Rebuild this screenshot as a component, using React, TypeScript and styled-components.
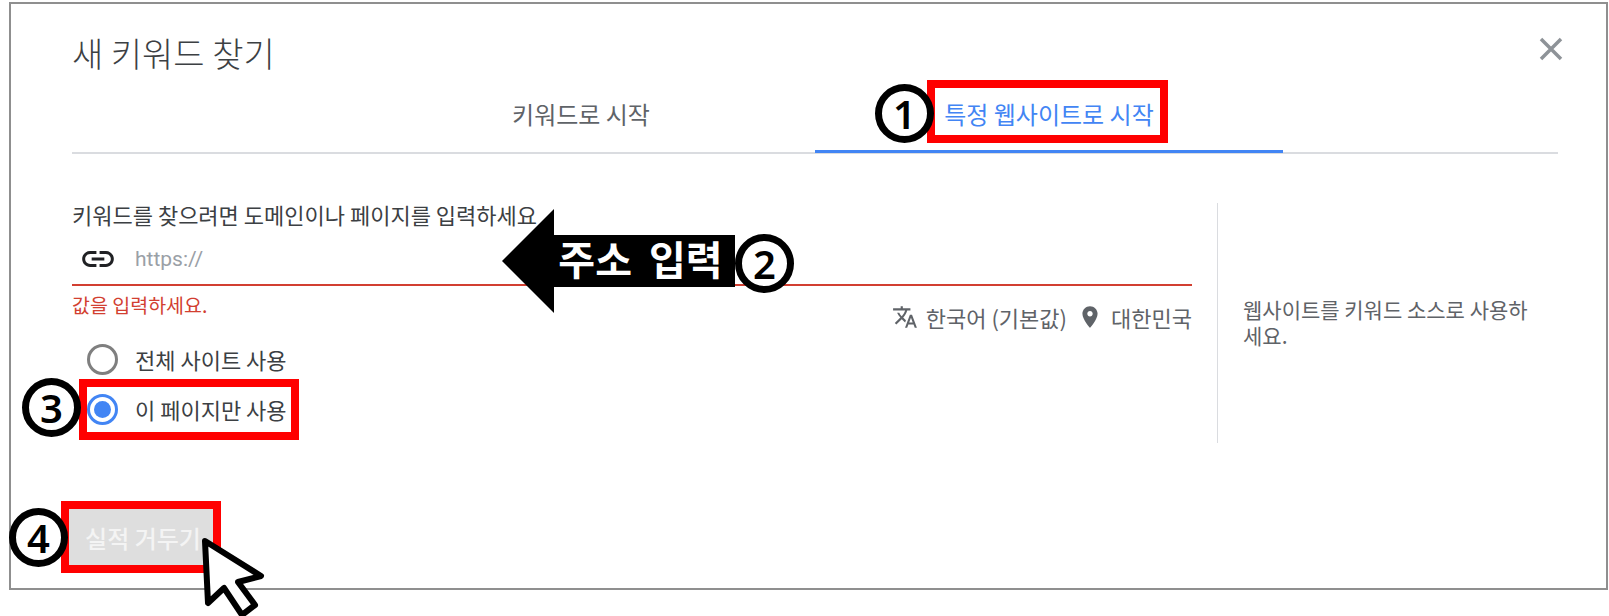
import { FC } from "react";
import styled, { createGlobalStyle } from "styled-components";

const GlobalStyle = createGlobalStyle`
    html, body {
        margin: 0;
        padding: 0;
        background: white;
    }
    body {
        font-family: "Noto Sans CJK KR", "Noto Sans", sans-serif;
    }
`;

const App: FC = () => {
    return (
        <Page>
            <GlobalStyle />
            <Dialog>
                <Header>
                    <Title>새 키워드 찾기</Title>
                    <CloseIcon viewBox="0 0 24 24">
                        <path d="M2 2 L22 22 M22 2 L2 22" />
                    </CloseIcon>
                </Header>

                <Tabs>
                    <Tab>키워드로 시작</Tab>
                    <Tab $active>특정 웹사이트로 시작</Tab>
                </Tabs>

                <Body>
                    <FormColumn>
                        <FieldLabel>키워드를 찾으려면 도메인이나 페이지를 입력하세요</FieldLabel>
                        <InputRow>
                            <LinkIcon viewBox="0 0 24 24">
                                <path d="M3.9 12c0-1.71 1.39-3.1 3.1-3.1h4V7H7c-2.76 0-5 2.24-5 5s2.24 5 5 5h4v-1.9H7c-1.71 0-3.1-1.39-3.1-3.1zM8 13h8v-2H8v2zm9-6h-4v1.9h4c1.71 0 3.1 1.39 3.1 3.1s-1.39 3.1-3.1 3.1h-4V17h4c2.76 0 5-2.24 5-5s-2.24-5-5-5z" />
                            </LinkIcon>
                            <Placeholder>https://</Placeholder>
                        </InputRow>
                        <FieldMeta>
                            <ErrorText>값을 입력하세요.</ErrorText>
                            <Locale>
                                <LocaleIcon viewBox="0 0 24 24">
                                    <path d="M12.87 15.07l-2.54-2.51.03-.03c1.74-1.94 2.98-4.17 3.71-6.53H17V4h-7V2H8v2H1v1.99h11.17C11.5 7.92 10.44 9.75 9 11.35 8.07 10.32 7.3 9.19 6.69 8h-2c.73 1.63 1.73 3.17 2.98 4.56l-5.09 5.02L4 19l5-5 3.11 3.11.76-2.04zM18.5 10h-2L12 22h2l1.12-3h4.75L21 22h2l-4.5-12zm-2.62 7l1.62-4.33L19.12 17h-3.24z" />
                                </LocaleIcon>
                                <LocaleText>한국어 (기본값)</LocaleText>
                                <LocaleIcon viewBox="0 0 24 24" $gap>
                                    <path d="M12 2C8.13 2 5 5.13 5 9c0 5.25 7 13 7 13s7-7.75 7-13c0-3.87-3.13-7-7-7zm0 9.5c-1.38 0-2.5-1.12-2.5-2.5s1.12-2.5 2.5-2.5 2.5 1.12 2.5 2.5-1.12 2.5-2.5 2.5z" />
                                </LocaleIcon>
                                <LocaleText>대한민국</LocaleText>
                            </Locale>
                        </FieldMeta>
                        <RadioGroup>
                            <RadioRow>
                                <Radio />
                                <RadioLabel>전체 사이트 사용</RadioLabel>
                            </RadioRow>
                            <RadioRow>
                                <Radio $checked />
                                <RadioLabel>이 페이지만 사용</RadioLabel>
                            </RadioRow>
                        </RadioGroup>
                    </FormColumn>
                    <HelpColumn>
                        <HelpText>웹사이트를 키워드 소스로 사용하세요.</HelpText>
                    </HelpColumn>
                </Body>

                <SubmitButton>실적 거두기</SubmitButton>
            </Dialog>

            {/* annotations drawn over the screenshot */}
            <RedBox $x={927} $y={80} $w={241} $h={63} />
            <RedBox $x={79} $y={379} $w={220} $h={61} />
            <RedBox $x={61} $y={501} $w={160} $h={72} />

            <ArrowLabel>
                <ArrowHead viewBox="0 0 52 104">
                    <path d="M52 0 L0 52 L52 104 Z" />
                </ArrowHead>
                <ArrowShaft>주소 입력</ArrowShaft>
            </ArrowLabel>

            <NumberBadge $x={875} $y={84}>1</NumberBadge>
            <NumberBadge $x={735} $y={234}>2</NumberBadge>
            <NumberBadge $x={22} $y={378}>3</NumberBadge>
            <NumberBadge $x={9} $y={508}>4</NumberBadge>

            <Cursor viewBox="0 0 70 85">
                <path d="M5 5 L61 40 L38 46 L55 69 L42 79 L24 52 L8 67 Z" />
            </Cursor>
        </Page>
    );
};

export default App;

const Page = styled.div`
    position: relative;
    width: 1609px;
    height: 616px;
    padding: 2px 0 0 9px;
    box-sizing: border-box;
    overflow: hidden;
    background: white;
`;

const Dialog = styled.div`
    width: 1599px;
    height: 588px;
    box-sizing: border-box;
    padding: 0 48px 0 61px;
    border: 2px solid #8f8f8f;
    display: flex;
    flex-direction: column;
    background: white;
`;

const Header = styled.div`
    height: 85px;
    display: flex;
    justify-content: space-between;
    align-items: flex-start;
`;

const Title = styled.div`
    margin-top: 26px;
    font-size: 34px;
    line-height: 46px;
    font-weight: 300;
    color: #3c4043;
`;

const CloseIcon = styled.svg`
    width: 24px;
    height: 24px;
    margin-top: 33px;
    margin-right: -5px;
    fill: none;
    stroke: #8e9398;
    stroke-width: 3.5;
`;

const Tabs = styled.div`
    display: flex;
    justify-content: center;
    border-bottom: 2px solid #dadce0;
`;

const Tab = styled.div<{ $active?: boolean }>`
    width: 468px;
    height: 64px;
    box-sizing: border-box;
    padding-bottom: 12px;
    margin-bottom: -1px;
    display: flex;
    justify-content: center;
    align-items: center;
    font-size: 24px;
    color: ${(p) => (p.$active ? "#4285f4" : "#5f6368")};
    border-bottom: 3px solid ${(p) => (p.$active ? "#4285f4" : "transparent")};
`;

const Body = styled.div`
    height: 240px;
    margin-top: 49px;
    display: flex;
`;

const FormColumn = styled.div`
    width: 1120px;
    display: flex;
    flex-direction: column;
`;

const FieldLabel = styled.div`
    height: 30px;
    margin-top: -4px;
    font-size: 22px;
    line-height: 30px;
    color: #3c4043;
    white-space: nowrap;
`;

const InputRow = styled.div`
    height: 57px;
    box-sizing: border-box;
    display: flex;
    align-items: center;
    padding: 5px 0 0 7px;
    border-bottom: 2px solid #d23f31;
`;

const LinkIcon = styled.svg`
    width: 38px;
    height: 38px;
    fill: #202124;
`;

const Placeholder = styled.div`
    margin-left: 18px;
    font-family: Roboto, sans-serif;
    font-size: 21px;
    color: #9aa0a6;
`;

const FieldMeta = styled.div`
    height: 48px;
    display: flex;
    justify-content: space-between;
    align-items: flex-start;
`;

const ErrorText = styled.div`
    margin-top: 5px;
    font-size: 19.5px;
    line-height: 28px;
    color: #d23f31;
`;

const Locale = styled.div`
    margin-top: 17px;
    display: flex;
    align-items: center;
    gap: 8px;
`;

const LocaleIcon = styled.svg<{ $gap?: boolean }>`
    width: 26px;
    height: 26px;
    fill: #5f6368;
    margin-left: ${(p) => (p.$gap ? "2px" : "0")};
`;

const LocaleText = styled.div`
    font-size: 22px;
    line-height: 28px;
    color: #5f6368;
    white-space: nowrap;
`;

const RadioGroup = styled.div`
    display: flex;
    flex-direction: column;
    padding-left: 15px;
`;

const RadioRow = styled.div`
    height: 50px;
    display: flex;
    align-items: center;
    gap: 17px;
`;

const Radio = styled.div<{ $checked?: boolean }>`
    width: 31px;
    height: 31px;
    box-sizing: border-box;
    border-radius: 50%;
    border: 3px solid ${(p) => (p.$checked ? "#4285f4" : "#7f7f7f")};
    display: flex;
    align-items: center;
    justify-content: center;

    &::after {
        content: "";
        display: ${(p) => (p.$checked ? "block" : "none")};
        width: 17px;
        height: 17px;
        border-radius: 50%;
        background: #4285f4;
    }
`;

const RadioLabel = styled.div`
    font-size: 22px;
    line-height: 30px;
    color: #3c4043;
    white-space: nowrap;
`;

const HelpColumn = styled.div`
    flex: 1;
    margin-left: 25px;
    padding: 93px 0 0 25px;
    border-left: 1px solid #dadce0;
`;

const HelpText = styled.div`
    width: 292px;
    font-size: 21px;
    line-height: 26px;
    color: #5f6368;
`;

const SubmitButton = styled.div`
    width: 144px;
    height: 56px;
    box-sizing: border-box;
    padding-left: 4px;
    margin: 66px 0 0 -3px;
    display: flex;
    align-items: center;
    justify-content: center;
    background: #dedede;
    color: #f4f4f4;
    font-size: 24px;
    font-weight: 500;
    white-space: nowrap;
`;

const RedBox = styled.div<{ $x: number; $y: number; $w: number; $h: number }>`
    position: absolute;
    left: ${(p) => p.$x}px;
    top: ${(p) => p.$y}px;
    width: ${(p) => p.$w}px;
    height: ${(p) => p.$h}px;
    box-sizing: border-box;
    border: 8px solid #ff0000;
`;

const ArrowLabel = styled.div`
    position: absolute;
    left: 502px;
    top: 209px;
    display: flex;
    align-items: center;
`;

const ArrowHead = styled.svg`
    width: 52px;
    height: 104px;
    fill: black;
    display: block;
`;

const ArrowShaft = styled.div`
    width: 181px;
    height: 52px;
    box-sizing: border-box;
    padding: 0 8px 7px 0;
    display: flex;
    align-items: center;
    justify-content: center;
    background: black;
    color: white;
    font-size: 40px;
    font-weight: 700;
    word-spacing: 8px;
    white-space: nowrap;
`;

const NumberBadge = styled.div<{ $x: number; $y: number }>`
    position: absolute;
    left: ${(p) => p.$x}px;
    top: ${(p) => p.$y}px;
    width: 59px;
    height: 59px;
    box-sizing: border-box;
    border: 7px solid black;
    border-radius: 50%;
    background: white;
    display: flex;
    align-items: center;
    justify-content: center;
    font-family: "Noto Sans", sans-serif;
    font-size: 40px;
    font-weight: 600;
    line-height: 1;
    color: black;
`;

const Cursor = styled.svg`
    position: absolute;
    left: 200px;
    top: 536px;
    width: 70px;
    height: 85px;
    fill: white;
    stroke: black;
    stroke-width: 6;
    stroke-linejoin: round;
`;
